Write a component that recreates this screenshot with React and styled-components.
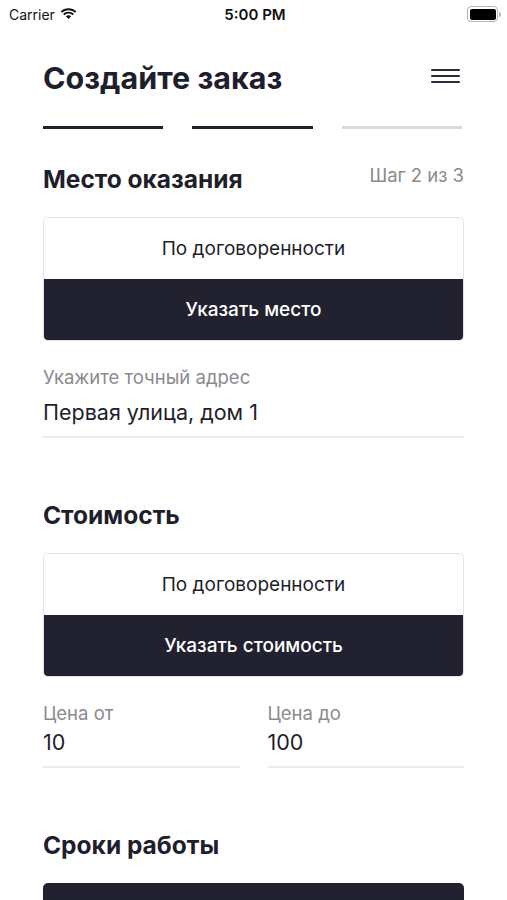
import React from 'react'
import styled, { createGlobalStyle } from 'styled-components'

const GlobalStyle = createGlobalStyle`
  body {
    margin: 0;
    background: #ffffff;
    font-family: 'Inter', 'Liberation Sans', sans-serif;
    color: #1f1e2c;
  }
`

const Screen = styled.div`
  width: 507px;
  height: 900px;
  overflow: hidden;
  background: #ffffff;
`

const StatusBar = styled.div`
  height: 28px;
  display: grid;
  grid-template-columns: 1fr auto 1fr;
  align-items: center;
  padding: 0 6px 0 9px;
  font-size: 14px;
  color: #111;
`

const Carrier = styled.div`
  display: flex;
  align-items: center;
  gap: 5px;
`

const Time = styled.div`
  font-weight: 600;
  font-size: 15px;
`

const Battery = styled.div`
  justify-self: end;
  display: flex;
  align-items: center;
`

const BatteryBody = styled.div`
  width: 26px;
  height: 11px;
  border: 1.5px solid #b5b5b5;
  border-radius: 4px;
  padding: 1.5px;
  box-sizing: content-box;
  &::before {
    content: '';
    display: block;
    width: 100%;
    height: 100%;
    background: #000;
    border-radius: 2px;
  }
`

const BatteryTip = styled.div`
  width: 2px;
  height: 5px;
  margin-left: 1px;
  background: #b5b5b5;
  border-radius: 0 2px 2px 0;
`

const Content = styled.div`
  padding: 0 43px;
`

const Header = styled.div`
  display: flex;
  align-items: center;
  justify-content: space-between;
  margin-top: 30px;
  height: 40px;
`

const Title = styled.h1`
  margin: 0;
  font-size: 30.5px;
  line-height: 40px;
  font-weight: 700;
  color: #1f1e2c;
`

const MenuButton = styled.div`
  width: 29px;
  display: flex;
  flex-direction: column;
  gap: 4px;
  margin-right: 4px;
  margin-top: -4px;
  & > span {
    display: block;
    height: 2px;
    background: #2b2a3a;
    border-radius: 1px;
  }
`

const Progress = styled.div`
  display: grid;
  grid-template-columns: repeat(3, 1fr);
  gap: 29px;
  margin-top: 28px;
  margin-right: 2px;
`

const Segment = styled.div`
  height: 3px;
  background: ${p => (p.$done ? '#22212f' : '#d9d9dc')};
`

const SectionHead = styled.div`
  display: flex;
  justify-content: space-between;
  align-items: flex-start;
  margin-top: ${p => p.$top}px;
`

const SectionTitle = styled.h2`
  margin: 0;
  font-size: 24.5px;
  line-height: 30px;
  font-weight: 700;
  color: #1f1e2c;
`

const StepText = styled.span`
  font-size: 18.5px;
  line-height: 22px;
  color: #8a8a8f;
  margin-top: 0;
`

const Choice = styled.div`
  margin-top: 23px;
  border-radius: 5px;
  overflow: hidden;
  border: 1px solid #e4e4e6;
`

const Option = styled.div`
  height: 61px;
  display: flex;
  align-items: center;
  justify-content: center;
  font-size: 19px;
  color: ${p => (p.$active ? '#ffffff' : '#1f1e2c')};
  background: ${p => (p.$active ? '#22212f' : '#ffffff')};
  font-weight: ${p => (p.$active ? 500 : 400)};
`

const Fields = styled.div`
  display: grid;
  grid-template-columns: ${p => (p.$split ? '1fr 1fr' : '1fr')};
  gap: 28px;
  margin-top: 25px;
`

const Field = styled.div`
  border-bottom: 2px solid #ececee;
  padding-bottom: 11px;
`

const Label = styled.div`
  font-size: 18.5px;
  color: #8a8a8f;
  line-height: 22px;
`

const Value = styled.div`
  font-size: 21.5px;
  color: #1f1e2c;
  line-height: 26px;
  margin-top: ${p => p.$gap}px;
`

const DarkBlock = styled.div`
  margin-top: 23px;
  height: 61px;
  background: #22212f;
  border-radius: 5px;
`

export default function App() {
  return (
    <Screen>
      <GlobalStyle />
      <StatusBar>
        <Carrier>
          Carrier
          <svg width="17" height="12" viewBox="0 0 17 12">
            <path d="M8.5 2.2c2.5 0 4.8 1 6.5 2.6l1.3-1.4C14.3 1.4 11.5.2 8.5.2S2.7 1.4.7 3.4L2 4.8c1.7-1.6 4-2.6 6.5-2.6z" fill="#111" />
            <path d="M8.5 5.6c1.6 0 3 .6 4.1 1.6l1.3-1.4C12.5 4.5 10.6 3.7 8.5 3.7S4.5 4.5 3.1 5.8l1.3 1.4c1.1-1 2.5-1.6 4.1-1.6z" fill="#111" />
            <path d="M8.5 7.2c-1 0-1.9.4-2.6 1L8.5 11l2.6-2.8c-.7-.6-1.6-1-2.6-1z" fill="#111" />
          </svg>
        </Carrier>
        <Time>5:00 PM</Time>
        <Battery>
          <BatteryBody />
          <BatteryTip />
        </Battery>
      </StatusBar>
      <Content>
        <Header>
          <Title>Создайте заказ</Title>
          <MenuButton>
            <span />
            <span />
            <span />
          </MenuButton>
        </Header>
        <Progress>
          <Segment $done />
          <Segment $done />
          <Segment />
        </Progress>

        <SectionHead $top={35}>
          <SectionTitle>Место оказания</SectionTitle>
          <StepText>Шаг 2 из 3</StepText>
        </SectionHead>
        <Choice>
          <Option>По договоренности</Option>
          <Option $active>Указать место</Option>
        </Choice>
        <Fields>
          <Field>
            <Label>Укажите точный адрес</Label>
            <Value $gap={11}>Первая улица, дом 1</Value>
          </Field>
        </Fields>

        <SectionHead $top={62}>
          <SectionTitle>Стоимость</SectionTitle>
        </SectionHead>
        <Choice>
          <Option>По договоренности</Option>
          <Option $active>Указать стоимость</Option>
        </Choice>
        <Fields $split>
          <Field>
            <Label>Цена от</Label>
            <Value $gap={5}>10</Value>
          </Field>
          <Field>
            <Label>Цена до</Label>
            <Value $gap={5}>100</Value>
          </Field>
        </Fields>

        <SectionHead $top={62}>
          <SectionTitle>Сроки работы</SectionTitle>
        </SectionHead>
        <DarkBlock />
      </Content>
    </Screen>
  )
}
